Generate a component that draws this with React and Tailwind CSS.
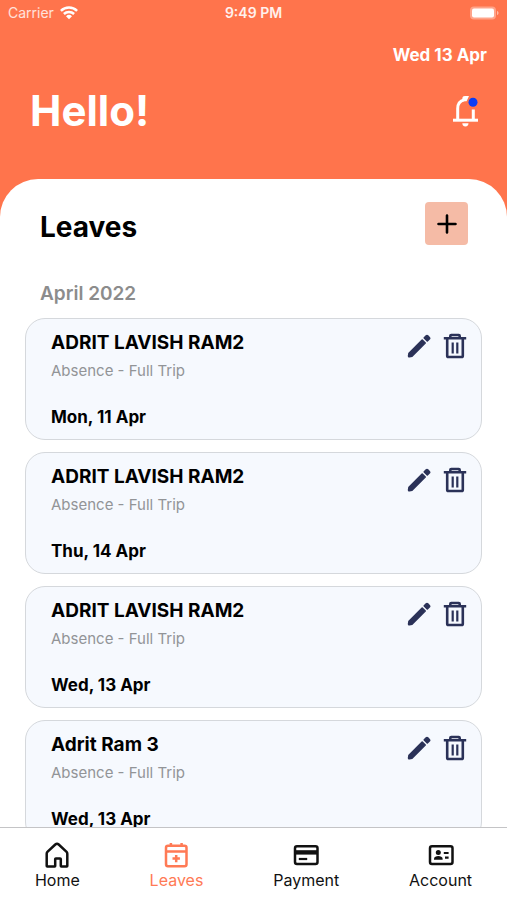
import { useState } from "react";

const initialLeaves = [
  { id: 1, name: "ADRIT LAVISH RAM2", type: "Absence - Full Trip", date: "Mon, 11 Apr" },
  { id: 2, name: "ADRIT LAVISH RAM2", type: "Absence - Full Trip", date: "Thu, 14 Apr" },
  { id: 3, name: "ADRIT LAVISH RAM2", type: "Absence - Full Trip", date: "Wed, 13 Apr" },
  { id: 4, name: "Adrit Ram 3", type: "Absence - Full Trip", date: "Wed, 13 Apr" },
];

const WifiIcon = () => (
  <svg width="18" height="14" viewBox="0 0 18 14" fill="none" stroke="currentColor" strokeWidth="2.5">
    <path d="M.9 4.8a11.6 11.6 0 0 1 16.2 0" />
    <path d="M3.9 8a7.4 7.4 0 0 1 10.200 0" />
    <path d="M9 13.200 6 10.200a4.300 4.300 0 0 1 6 0z" fill="currentColor" stroke="none" />
  </svg>
);

const BatteryIcon = () => (
  <svg width="30" height="14" viewBox="0 0 30 14">
    <rect x="1" y=".5" width="26" height="13" rx="4" fill="#fff" fillOpacity=".35" />
    <rect x="3" y="2.5" width="22" height="9" rx="2" fill="#fff" />
    <path d="M28 5v4c1-.3 1.500-1.100 1.500-2s-.5-1.700-1.500-2z" fill="#fff" fillOpacity=".5" />
  </svg>
);

const BellIcon = () => (
  <svg width="28" height="32" viewBox="0 0 28 32" fill="none">
    <path
      d="M5.700 25V13.500c0-4.500 2.600-7.700 6.400-8.600M21.300 14.500V25"
      stroke="#fff"
      strokeWidth="3"
    />
    <path d="M10.400 6.200V3.200C10.400 1.800 11.400 1 12.800 1h4.200l-2.400 5.200z" fill="#fff" />
    <path d="M1 25.200h25" stroke="#fff" strokeWidth="3" />
    <path d="M10.300 28.300h6.200a3.100 3.100 0 0 1-6.200 0z" fill="#fff" />
    <circle cx="21" cy="7.200" r="4.500" fill="#0a3cf5" />
  </svg>
);

const PencilIcon = () => (
  <svg width="24" height="26" viewBox="0 0 24 26" fill="currentColor" stroke="currentColor" strokeWidth="1.600" strokeLinejoin="round">
    <path d="M2 20.200 15.200 7l3 3L5 23.200l-2.600.6c-.5.100-.9-.3-.8-.8z" />
    <path d="m17.300 4.900 2-2c.4-.4 1-.4 1.400 0l1.600 1.600c.4.400.4 1 0 1.400l-2 2z" />
  </svg>
);

const TrashIcon = () => (
  <svg width="24" height="26" viewBox="0 0 24 26" fill="none" stroke="currentColor" strokeWidth="2.600" strokeLinejoin="round">
    <path d="M.8 5.300h22.400M7.300 5V3c0-.6.4-1 1-1h7.400c.6 0 1 .4 1 1v2" />
    <path d="M4.200 5.500v17.200c0 .8.500 1.300 1.300 1.300h13c.8 0 1.300-.5 1.300-1.300V5.500" />
    <path d="M9.700 9.500v11M14.300 9.500v11" strokeWidth="2.200" />
  </svg>
);

const HomeIcon = () => (
  <svg width="26" height="26" viewBox="0 0 26 26" fill="none" stroke="currentColor" strokeWidth="2.500" strokeLinejoin="round">
    <path d="M2.700 24V11.700c0-.7.2-1.300.7-1.800l7.900-7.400c1-.9 2.400-.9 3.400 0l7.900 7.400c.5.500.7 1.100.7 1.800V24c0 .3-.2.500-.5.500h-5.500c-.3 0-.5-.2-.5-.5v-6.900c0-.4-.3-.7-.7-.7h-4.200c-.4 0-.7.3-.7.7V24c0 .3-.2.500-.5.500H3.200c-.3 0-.5-.2-.5-.5z" />
  </svg>
);

const CalendarIcon = () => (
  <svg width="26" height="26" viewBox="0 0 26 26" fill="none" stroke="currentColor" strokeWidth="2.500" strokeLinejoin="round">
    <rect x="3" y="3.700" width="20.500" height="20.500" rx="2" />
    <path d="M3 9.400h20.500M7.900 1v3M18.600 1v3M13.200 12.900v7.400M9.500 16.600h7.400" />
  </svg>
);

const CardIcon = () => (
  <svg width="26" height="26" viewBox="0 0 26 26" fill="none" stroke="currentColor" strokeWidth="2.500">
    <rect x="2" y="4.300" width="22.500" height="17.700" rx="2" />
    <path d="M2 10.400h22" strokeWidth="4.400" />
    <path d="M5.800 17h8.400" strokeWidth="2.200" />
  </svg>
);

const AccountIcon = () => (
  <svg width="26" height="26" viewBox="0 0 26 26" fill="none" stroke="currentColor" strokeWidth="2.500">
    <rect x="2" y="4.300" width="22.500" height="17.700" rx="2" />
    <circle cx="10.300" cy="10.600" r="2.500" fill="currentColor" stroke="none" />
    <path d="M6 17.700v-.9c0-2 2.200-2.900 4.300-2.900s4.300.9 4.300 2.900v.9z" fill="currentColor" stroke="none" />
    <path d="M15.800 11h4.800M17 15.700h3.600" strokeWidth="2.200" />
  </svg>
);

const tabs = [
  { name: "Home", Icon: HomeIcon },
  { name: "Leaves", Icon: CalendarIcon },
  { name: "Payment", Icon: CardIcon },
  { name: "Account", Icon: AccountIcon },
];

function LeaveCard({ leave, onDelete }) {
  return (
    <li className="flex justify-between rounded-[20px] border border-[#d5d8dc] bg-[#f6f9fe] pt-3 pr-[14px] pb-[10px] pl-[25px]">
      <div>
        <h3 className="text-[19px] leading-6 font-bold text-black">{leave.name}</h3>
        <p className="mt-1 text-[15px] leading-6 text-[#929497]">{leave.type}</p>
        <p className="mt-[22px] text-[17px] leading-6 font-bold text-black">{leave.date}</p>
      </div>
      <div className="flex items-start gap-3 pt-[2px] text-[#2b3258]">
        <button type="button" aria-label="Edit leave">
          <PencilIcon />
        </button>
        <button type="button" aria-label="Delete leave" onClick={() => onDelete(leave.id)}>
          <TrashIcon />
        </button>
      </div>
    </li>
  );
}

function App() {
  const [leaves, setLeaves] = useState(initialLeaves);
  const [activeTab, setActiveTab] = useState("Leaves");

  const removeLeave = (id) => {
    setLeaves(leaves.filter((item) => item.id !== id));
  };

  return (
    <div className="flex h-screen flex-col bg-[#ff744c] font-['Inter',sans-serif]">
      <header className="text-white">
        <div className="grid grid-cols-3 items-center px-2 pt-[3px] text-[14px] leading-5">
          <div className="flex items-center gap-[6px]">
            <span className="text-white/80">Carrier</span>
            <WifiIcon />
          </div>
          <span className="text-center font-semibold text-white/90">9:49 PM</span>
          <div className="flex justify-end">
            <BatteryIcon />
          </div>
        </div>
        <p className="mt-5 px-5 text-right text-[17px] leading-6 font-bold">Wed 13 Apr</p>
        <div className="mt-[18px] flex items-center justify-between pr-[27px] pb-[42px] pl-[30px]">
          <h1 className="text-[42px] leading-[52px] font-bold">Hello!</h1>
          <button type="button" aria-label="Notifications">
            <BellIcon />
          </button>
        </div>
      </header>

      <main className="min-h-0 flex-1 overflow-hidden rounded-t-[38px] bg-white px-[25px] pt-[23px]">
        <div className="flex items-start justify-between pr-[14px] pl-[15px]">
          <h2 className="text-[28px] leading-[50px] font-bold text-black">Leaves</h2>
          <button
            type="button"
            aria-label="Add leave"
            className="flex size-[43px] items-center justify-center rounded-[4px] bg-[#f5bba6] text-black"
          >
            <svg width="20" height="20" viewBox="0 0 20 20" stroke="currentColor" strokeWidth="2.600" strokeLinecap="round">
              <path d="M10 1.500v17M1.500 10h17" />
            </svg>
          </button>
        </div>
        <p className="mt-[30px] pl-[15px] text-[19px] leading-6 font-semibold text-[#8c8c8c]">April 2022</p>
        <ul className="mt-3 flex flex-col gap-3">
          {leaves.map((item) => (
            <LeaveCard key={item.id} leave={item} onDelete={removeLeave} />
          ))}
        </ul>
      </main>

      <nav className="flex justify-around border-t border-[#c4c4c6] bg-white pt-[14px] pb-2">
        {tabs.map(({ name, Icon }) => (
          <button
            key={name}
            type="button"
            onClick={() => setActiveTab(name)}
            className={
              "flex flex-col items-center text-[16px] leading-6 " +
              (activeTab === name ? "text-[#ff7a55]" : "text-[#111111]")
            }
          >
            <Icon />
            {name}
          </button>
        ))}
      </nav>
    </div>
  );
}

export default App;
